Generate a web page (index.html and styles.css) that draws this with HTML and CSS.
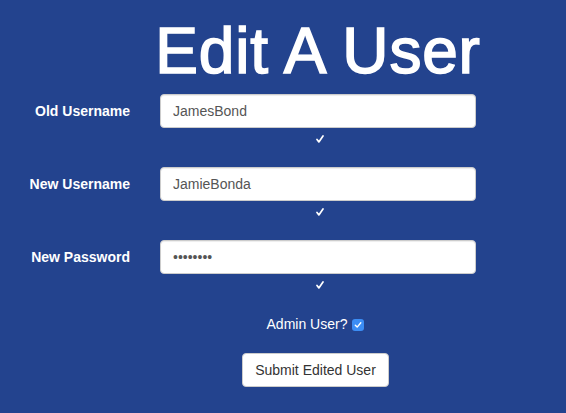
FILE: index.html
```html
<!DOCTYPE html>
<html lang="en">
<head>
<meta charset="utf-8">
<title>Edit A User</title>
<link rel="stylesheet" href="styles.css">
</head>
<body>
<div class="page">
  <div class="title-col">
    <h1 class="title">Edit A User</h1>
  </div>
  <form class="form">
    <div class="group">
      <label class="label" for="old">Old Username</label>
      <input class="control" id="old" type="text" value="JamesBond">
      <div class="check"><svg width="8" height="8" viewBox="0 0 8 8"><path d="M1 4.4 L2.9 6.9 L7 1" fill="none" stroke="#fff" stroke-width="1.7" stroke-linecap="round" stroke-linejoin="round"/></svg></div>
    </div>
    <div class="group">
      <label class="label" for="new">New Username</label>
      <input class="control" id="new" type="text" value="JamieBonda">
      <div class="check"><svg width="8" height="8" viewBox="0 0 8 8"><path d="M1 4.4 L2.9 6.9 L7 1" fill="none" stroke="#fff" stroke-width="1.7" stroke-linecap="round" stroke-linejoin="round"/></svg></div>
    </div>
    <div class="group">
      <label class="label" for="pw">New Password</label>
      <input class="control" id="pw" type="password" value="12345678">
      <div class="check"><svg width="8" height="8" viewBox="0 0 8 8"><path d="M1 4.4 L2.9 6.9 L7 1" fill="none" stroke="#fff" stroke-width="1.7" stroke-linecap="round" stroke-linejoin="round"/></svg></div>
    </div>
    <div class="actions">
      <label class="admin">Admin User?
        <span class="box"><svg width="8" height="8" viewBox="0 0 8 8"><path d="M1.3 4.2 L3.2 6.1 L6.8 1.8" fill="none" stroke="#fff" stroke-width="1.4" stroke-linecap="round" stroke-linejoin="round"/></svg></span>
      </label>
      <button class="btn" type="button">Submit Edited User</button>
    </div>
  </form>
</div>
</body>
</html>
```

FILE: styles.css
```css
html, body {
  margin: 0;
  padding: 0;
  background: #23438e;
}

body {
  font-family: "Liberation Sans", Arial, Helvetica, sans-serif;
  color: #fff;
  font-size: 14px;
  line-height: 20px;
}

.page {
  padding-top: 16px;
}

.title-col {
  margin-left: 160px;
  width: 316px;
}

.title {
  margin: 0 -12px 0 -12px;
  font-size: 64px;
  line-height: 70px;
  font-weight: normal;
  letter-spacing: 0.8px;
  -webkit-text-stroke: 1.6px #fff;
  text-align: center;
  white-space: nowrap;
  color: #fff;
}

.form {
  margin-top: 8px;
}

.group {
  display: grid;
  grid-template-columns: 130px 316px;
  column-gap: 30px;
  margin-bottom: 19px;
}

.label {
  grid-column: 1;
  grid-row: 1;
  text-align: right;
  font-weight: bold;
  padding-top: 7px;
  line-height: 20px;
}

.control {
  grid-column: 2;
  grid-row: 1;
  box-sizing: border-box;
  height: 34px;
  width: 100%;
  margin: 0;
  padding: 6px 12px;
  border: 1px solid #ccc;
  border-radius: 4px;
  background: #fff;
  color: #555;
  font-family: "Liberation Sans", Arial, Helvetica, sans-serif;
  font-size: 14px;
  line-height: 20px;
  box-shadow: inset 0 1px 1px rgba(0, 0, 0, 0.075);
  outline: none;
}

.check {
  grid-column: 2;
  grid-row: 2;
  height: 20px;
  box-sizing: border-box;
  padding-top: 7px;
  padding-left: 3px;
  display: flex;
  justify-content: center;
}

.check svg {
  display: block;
}

.actions {
  margin-left: 160px;
  width: 311px;
  padding-top: 1px;
  display: flex;
  flex-direction: column;
  align-items: center;
}

.admin {
  display: flex;
  align-items: center;
  gap: 5px;
  line-height: 20px;
  color: #fff;
}

.box {
  width: 12px;
  height: 12px;
  border-radius: 3px;
  background: #3b8df5;
  display: flex;
  align-items: center;
  justify-content: center;
  margin-top: 1px;
}

.box svg {
  display: block;
}

.btn {
  margin-top: 19px;
  box-sizing: border-box;
  height: 34px;
  padding: 6px 12px;
  border: 1px solid #ccc;
  border-radius: 4px;
  background: #fff;
  color: #333;
  font-family: "Liberation Sans", Arial, Helvetica, sans-serif;
  font-size: 14px;
  line-height: 20px;
}
```
